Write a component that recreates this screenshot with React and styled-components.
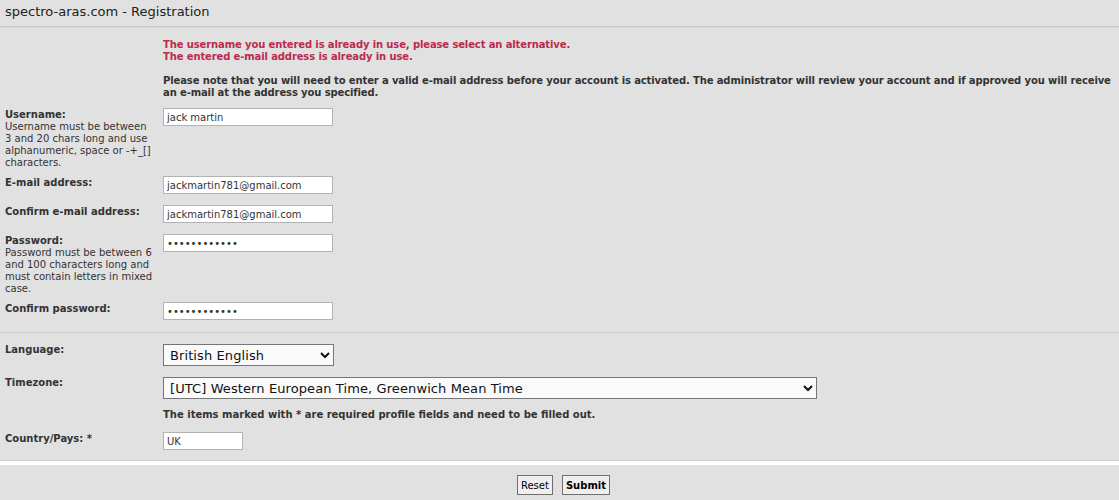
import React from "react";
import styled, { createGlobalStyle } from "styled-components";

const GlobalStyle = createGlobalStyle`
  body {
    margin: 0;
    background: #e1e1e1;
    font-family: "DejaVu Sans", Verdana, sans-serif;
    color: #333;
  }
`;

const Page = styled.div`
  width: 1119px;
  height: 500px;
  overflow: hidden;
  background: #e1e1e1;
`;

const Title = styled.div`
  height: 26px;
  line-height: 24px;
  padding-left: 5px;
  font-size: 13px;
  color: #222;
  border-bottom: 1px solid #c6c6c6;
  box-shadow: 0 1px 0 #d9d9d9;
`;

const Messages = styled.div`
  padding: 12px 0 0 163px;
  font-size: 10px;
  line-height: 12px;
  font-weight: bold;
  letter-spacing: -0.12px;
  white-space: nowrap;
`;

const ErrorLine = styled.div`
  color: #bc2a4d;
`;

const Note = styled.div`
  margin-top: 12px;
  color: #333;
`;

const Form = styled.form`
  margin-top: 6px;
`;

const Row = styled.div`
  display: grid;
  grid-template-columns: 158px 1fr;
  padding: 4px 0 4px 5px;
`;

const Label = styled.div`
  font-size: 10px;
  line-height: 12px;
  font-weight: bold;
  color: #333;
  white-space: nowrap;
`;

const Hint = styled.span`
  display: block;
  font-weight: normal;
`;

const TextInput = styled.input`
  display: block;
  box-sizing: border-box;
  width: ${(p) => p.$width || 170}px;
  height: 18px;
  margin: -1px 0 4px;
  padding: 0 3px;
  border: 1px solid #b3b3b3;
  background: #fff;
  font-family: "DejaVu Sans", Verdana, sans-serif;
  font-size: 10px;
  color: #333;
  outline: none;
`;

const Select = styled.select`
  display: block;
  box-sizing: border-box;
  width: ${(p) => p.$width}px;
  height: 22px;
  margin: 0 0 3px;
  padding: 0 2px;
  border: 1px solid #767676;
  border-radius: 0;
  background: #fafafa;
  font-family: "DejaVu Sans", Verdana, sans-serif;
  font-size: 13px;
  letter-spacing: 0.1px;
  color: #111;
`;

const Divider = styled.div`
  height: 1px;
  margin: 4px 0 7px;
  background: #cdcdcd;
`;

const NoteRow = styled.div`
  padding: 3px 0 8px 163px;
  font-size: 10px;
  line-height: 12px;
  font-weight: bold;
  color: #333;
`;

const Footer = styled.div`
  margin-top: 3px;
  border-top: 4px solid #fff;
  box-shadow: 0 -1px 0 #d2d2d2;
  padding: 10px 0 0 8px;
  display: flex;
  justify-content: center;
  gap: 9px;
`;

const Button = styled.button`
  height: 20px;
  padding: 0 3px;
  border: 1px solid #6f6f6f;
  border-radius: 0;
  background: #efefef;
  font-family: "DejaVu Sans", Verdana, sans-serif;
  font-size: 10px;
  font-weight: ${(p) => (p.$primary ? "bold" : "normal")};
  color: #000;
`;

const Field = ({ label, hint, children }) => (
  <Row>
    <Label>
      {label}
      {hint && <Hint>{hint}</Hint>}
    </Label>
    <div>{children}</div>
  </Row>
);

export default function App() {
  return (
    <Page>
      <GlobalStyle />
      <Title>spectro-aras.com - Registration</Title>
      <Messages>
        <ErrorLine>The username you entered is already in use, please select an alternative.</ErrorLine>
        <ErrorLine>The entered e-mail address is already in use.</ErrorLine>
        <Note>
          Please note that you will need to enter a valid e-mail address before your account is activated. The
          administrator will review your account and if approved you will receive
          <br />
          an e-mail at the address you specified.
        </Note>
      </Messages>
      <Form onSubmit={(e) => e.preventDefault()}>
        <Field
          label="Username:"
          hint={
            <>
              Username must be between
              <br />3 and 20 chars long and use
              <br />
              alphanumeric, space or -+_[]
              <br />
              characters.
            </>
          }
        >
          <TextInput type="text" defaultValue="jack martin" />
        </Field>
        <Field label="E-mail address:">
          <TextInput type="text" defaultValue="jackmartin781@gmail.com" />
        </Field>
        <Field label="Confirm e-mail address:">
          <TextInput type="text" defaultValue="jackmartin781@gmail.com" />
        </Field>
        <Field
          label="Password:"
          hint={
            <>
              Password must be between 6
              <br />
              and 100 characters long and
              <br />
              must contain letters in mixed
              <br />
              case.
            </>
          }
        >
          <TextInput type="password" defaultValue="jackmartin12" />
        </Field>
        <Field label="Confirm password:">
          <TextInput type="password" defaultValue="jackmartin12" />
        </Field>
        <Divider />
        <Field label="Language:">
          <Select $width={171} defaultValue="en">
            <option value="en">British English</option>
          </Select>
        </Field>
        <Field label="Timezone:">
          <Select $width={654} defaultValue="0">
            <option value="0">[UTC] Western European Time, Greenwich Mean Time</option>
          </Select>
        </Field>
        <NoteRow>The items marked with * are required profile fields and need to be filled out.</NoteRow>
        <Field label="Country/Pays: *">
          <TextInput type="text" $width={80} defaultValue="UK" />
        </Field>
        <Footer>
          <Button type="reset">Reset</Button>
          <Button type="submit" $primary>
            Submit
          </Button>
        </Footer>
      </Form>
    </Page>
  );
}
